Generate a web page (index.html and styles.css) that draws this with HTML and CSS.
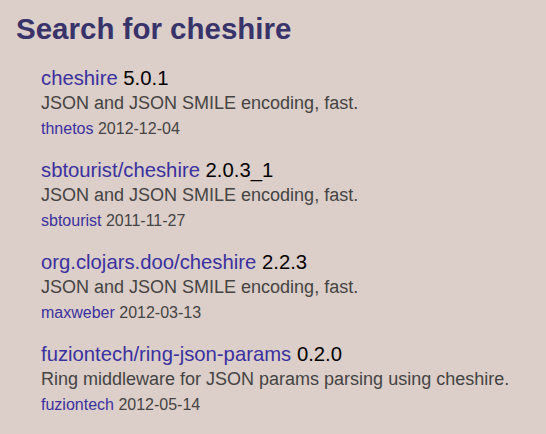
FILE: index.html
```html
<!DOCTYPE html>
<html>
<head>
<meta charset="utf-8">
<link rel="stylesheet" href="styles.css">
</head>
<body>
<h1 class="title">Search for cheshire</h1>
<ul class="results">
  <li class="result">
    <div class="name"><a href="#">cheshire</a> <span class="ver">5.0.1</span></div>
    <div class="desc">JSON and JSON SMILE encoding, fast.</div>
    <div class="meta"><a href="#">thnetos</a> 2012-12-04</div>
  </li>
  <li class="result">
    <div class="name"><a href="#">sbtourist/cheshire</a> <span class="ver">2.0.3_1</span></div>
    <div class="desc">JSON and JSON SMILE encoding, fast.</div>
    <div class="meta"><a href="#">sbtourist</a> 2011-11-27</div>
  </li>
  <li class="result">
    <div class="name"><a href="#">org.clojars.doo/cheshire</a> <span class="ver">2.2.3</span></div>
    <div class="desc">JSON and JSON SMILE encoding, fast.</div>
    <div class="meta"><a href="#">maxweber</a> 2012-03-13</div>
  </li>
  <li class="result">
    <div class="name"><a href="#">fuziontech/ring-json-params</a> <span class="ver">0.2.0</span></div>
    <div class="desc">Ring middleware for JSON params parsing using cheshire.</div>
    <div class="meta"><a href="#">fuziontech</a> 2012-05-14</div>
  </li>
</ul>
</body>
</html>
```

FILE: styles.css
```css
html, body {
  margin: 0;
  padding: 0;
  background: #dccec8;
  font-family: "Liberation Sans", Arial, sans-serif;
}
body {
  padding: 11px 16px;
}
.title {
  margin: 0 0 19px;
  font-size: 29.5px;
  line-height: 36px;
  font-weight: bold;
  color: #38336a;
}
.results {
  list-style: none;
  margin: 0;
  padding: 0 0 0 25px;
}
.result {
  margin-bottom: 17px;
}
a {
  color: #3a31a0;
  text-decoration: none;
}
.name {
  font-size: 20.3px;
  line-height: 25px;
}
.ver {
  color: #000;
}
.desc {
  font-size: 18px;
  line-height: 25px;
  color: #444;
}
.meta {
  font-size: 16px;
  line-height: 25px;
  color: #444;
}
```
